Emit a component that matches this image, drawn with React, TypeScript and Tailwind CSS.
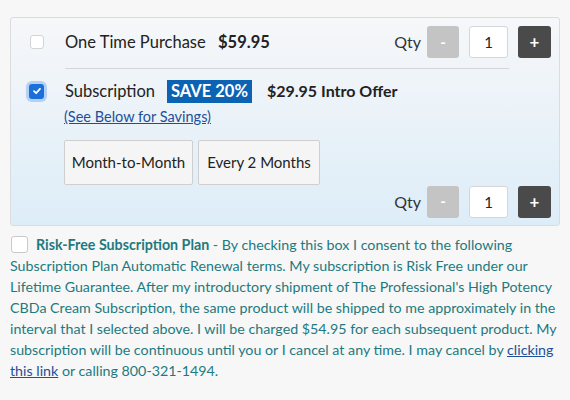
import { useState } from 'react';

function Box({ checked, onClick, size, className }: { checked: boolean; onClick: () => void; size: number; className?: string }) {
  return (
    <span
      onClick={onClick}
      style={{ width: size, height: size }}
      className={
        'inline-flex shrink-0 items-center justify-center rounded-[3px] cursor-pointer ' +
        (checked
          ? 'bg-[#1a6fd8] ring-[3px] ring-[#b4d0f4]'
          : 'bg-white border border-[#c9c9c9]') +
        ' ' +
        (className ?? '')
      }
    >
      {checked && (
        <svg width="10" height="10" viewBox="0 0 10 10" fill="none">
          <path d="M2 5.2 L4.1 7.2 L8 2.8" stroke="white" strokeWidth="1.8" strokeLinecap="round" strokeLinejoin="round" />
        </svg>
      )}
    </span>
  );
}

function QtyControl() {
  return (
    <div className="flex items-center">
      <span className="text-[16px] text-[#333] mr-[6px]">Qty</span>
      <button className="w-[32px] h-[32px] rounded-[3px] bg-[#c4c4c4] text-white text-[15px] font-bold">-</button>
      <input
        readOnly
        value="1"
        className="w-[39px] h-[32px] ml-[10px] mr-[10px] rounded-[3px] border border-[#d6d6d6] bg-white text-center text-[15px] text-[#222] outline-none"
      />
      <button className="w-[33px] h-[32px] rounded-[3px] bg-[#4a4a4a] text-white text-[17px] font-bold">+</button>
    </div>
  );
}

export default function App() {
  const [plan, setPlan] = useState<'once' | 'sub'>('sub');
  const [agree, setAgree] = useState(false);

  return (
    <div
      className="w-[570px] h-[400px] bg-[#f7f7f7] px-[10px] pt-[17px] text-[#222]"
      style={{ fontFamily: 'Lato, "Open Sans", sans-serif' }}
    >
      {/* Options box */}
      <div className="rounded-[3px] border border-[#dcdcdc] bg-gradient-to-b from-[#f6f7f9] to-[#ddedf8] pl-[18px] pr-[8px] pt-[8px] pb-[7px] h-[209px]">
        <div className="flex items-center">
          <Box checked={plan === 'once'} onClick={() => setPlan('once')} size={14} className="ml-[1px] mr-[21px] border-[#d4d4d4]" />
          <span className="text-[16.5px] w-[153px] shrink-0">One Time Purchase</span>
          <span className="text-[16.5px] font-bold">$59.95</span>
          <div className="ml-auto">
            <QtyControl />
          </div>
        </div>
        <div className="ml-[36px] mr-[42px] mt-[10px] border-t border-[#d3d6da]" />
        <div className="flex items-center mt-[10px]">
          <Box checked={plan === 'sub'} onClick={() => setPlan('sub')} size={15} className="mr-[21px]" />
          <span className="text-[16.5px] w-[102px] shrink-0">Subscription</span>
          <span className="bg-[#0c63b3] text-white font-bold text-[16.5px] px-[4px] h-[23px] leading-[23px]">SAVE 20%</span>
          <span className="ml-[15px] text-[16px] font-bold">$29.95 Intro Offer</span>
        </div>
        <a href="#" className="block ml-[35px] mt-[2px] text-[14.5px] text-[#1f4f98] underline">
          (See Below for Savings)
        </a>
        <div className="flex gap-[5px] ml-[35px] mt-[12px]">
          <button className="w-[129px] h-[45px] rounded-[2px] border border-[#cfcfcf] bg-[#f5f5f5] text-[15px] text-[#222]">
            Month-to-Month
          </button>
          <button className="w-[122px] h-[45px] rounded-[2px] border border-[#cfcfcf] bg-[#f5f5f5] text-[15px] text-[#222]">
            Every 2 Months
          </button>
        </div>
        <div className="flex justify-end mt-[1px]">
          <QtyControl />
        </div>
      </div>

      {/* Terms */}
      <p className="mt-[8px] text-[14.25px] leading-[21px] text-[#1e7a80]">
        <Box checked={agree} onClick={() => setAgree(!agree)} size={17} className="align-[-3px] mr-[8px] ml-[1px] rounded-[2px]" />
        <b>Risk-Free Subscription Plan</b> - By checking this box I consent to the following Subscription Plan
        Automatic Renewal terms. My subscription is Risk Free under our Lifetime Guarantee. After my introductory
        shipment of The Professional's High Potency CBDa Cream Subscription, the same product will be shipped to me
        approximately in the interval that I selected above. I will be charged $54.95 for each subsequent product. My
        subscription will be continuous until you or I cancel at any time. I may cancel by{' '}
        <a href="#" className="text-[#1f4f98] underline">
          clicking this link
        </a>{' '}
        or calling 800-321-1494.
      </p>
    </div>
  );
}
